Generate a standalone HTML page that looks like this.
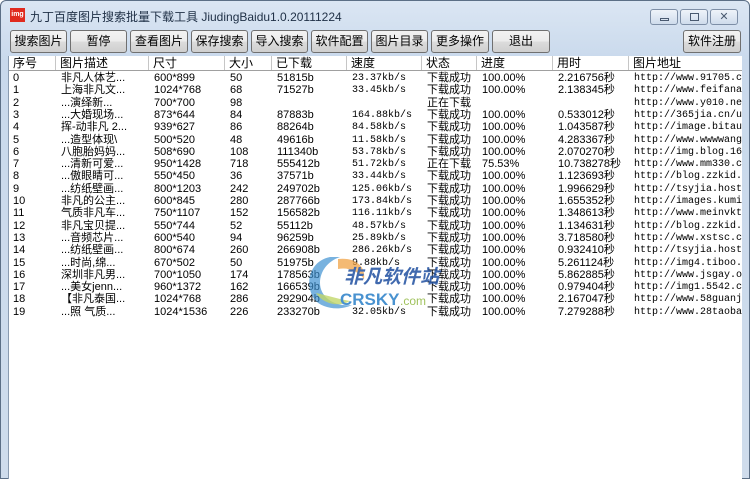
<!DOCTYPE html>
<html><head><meta charset="utf-8"><style>
*{margin:0;padding:0;box-sizing:border-box}
body{width:750px;height:479px;overflow:hidden;background:#fff;font-family:"Liberation Sans","Noto Sans CJK SC",sans-serif;position:relative}
.frame{position:absolute;left:0;top:0;width:750px;height:479px;background:linear-gradient(#dbe6f3,#c9d9ec 60px,#cfdcec);border:1px solid #5c6f86;border-radius:6px 6px 0 0}
.title{position:absolute;left:30px;top:8px;font-size:12px;color:#1e2f45;white-space:nowrap}
.logo{position:absolute;left:10px;top:8px;width:15px;height:14px;background:#e02a1e;color:#fff;font-size:7px;line-height:14px;text-align:center;font-weight:bold}
.wb{position:absolute;top:9px;height:16px;border:1px solid #7d8ea6;border-radius:3px;background:linear-gradient(#eef3f9,#cfdcec)}
.btn{position:absolute;top:30px;height:23px;border:1px solid #707070;border-radius:3px;background:linear-gradient(#f2f2f2 0,#ebebeb 50%,#dcdcdc 51%,#cfcfcf);font-size:12px;line-height:21px;text-align:center;color:#000;white-space:nowrap}
.list{position:absolute;left:8px;top:56px;width:734px;height:423px;background:#fff;border-left:1px solid #8a9bb0;overflow:hidden}
.hdr{position:absolute;left:0;top:0;width:734px;height:15px;border-bottom:1px solid #a0a0a0;background:#fff}
.hdr span{position:absolute;top:0;height:14px;font-size:12px;line-height:14px;border-right:1px solid #c6c6c6;padding-left:4px}
.r{position:absolute;left:0;height:12px;width:734px;font-size:11px;line-height:12px;white-space:nowrap}
.r span{position:absolute;top:0}
.r span.m{font-family:"Liberation Mono",monospace;font-size:10px;top:1px}
.wm{position:absolute;left:300px;top:253px;width:148px;height:60px;opacity:.85}
</style></head><body>
<div class="frame"></div>
<div class="logo">img</div>
<div class="title">九丁百度图片搜索批量下载工具 JiudingBaidu1.0.20111224</div>
<div class="wb" style="left:650px;width:28px"><div style="position:absolute;left:9px;top:8px;width:9px;height:3px;border:1px solid #4a5a70"></div></div>
<div class="wb" style="left:680px;width:28px"><div style="position:absolute;left:9px;top:3px;width:9px;height:8px;border:1px solid #4a5a70"></div></div>
<div class="wb" style="left:710px;width:28px;font-size:11px;text-align:center;line-height:14px;color:#4a5a70">✕</div>
<div class="btn" style="left:10px;width:57px">搜索图片</div>
<div class="btn" style="left:70px;width:57px">暂停</div>
<div class="btn" style="left:130px;width:58px">查看图片</div>
<div class="btn" style="left:191px;width:57px">保存搜索</div>
<div class="btn" style="left:251px;width:57px">导入搜索</div>
<div class="btn" style="left:311px;width:57px">软件配置</div>
<div class="btn" style="left:371px;width:57px">图片目录</div>
<div class="btn" style="left:431px;width:58px">更多操作</div>
<div class="btn" style="left:492px;width:58px">退出</div>
<div class="btn" style="left:683px;width:58px">软件注册</div>
<div class="list">
<div class="hdr">
<span style="left:0;width:47px">序号</span><span style="left:47px;width:93px">图片描述</span><span style="left:140px;width:76px">尺寸</span><span style="left:216px;width:47px">大小</span><span style="left:263px;width:75px">已下载</span><span style="left:338px;width:75px">速度</span><span style="left:413px;width:55px">状态</span><span style="left:468px;width:76px">进度</span><span style="left:544px;width:76px">用时</span><span style="left:620px;width:114px">图片地址</span>
</div>
<div id="rows"></div>
</div>
<script>
var d=[
["0","非凡人体艺...","600*899","50","51815b","23.37kb/s","下载成功","100.00%","2.216756秒","http://www.91705.com"],
["1","上海非凡文...","1024*768","68","71527b","33.45kb/s","下载成功","100.00%","2.138345秒","http://www.feifanart"],
["2","...演绎新...","700*700","98","","","正在下载","","","http://www.y010.net/"],
["3","...大婚现场...","873*644","84","87883b","164.88kb/s","下载成功","100.00%","0.533012秒","http://365jia.cn/up"],
["4","挥-动非凡 2...","939*627","86","88264b","84.58kb/s","下载成功","100.00%","1.043587秒","http://image.bitaut"],
["5","...造型体现\\","500*520","48","49616b","11.58kb/s","下载成功","100.00%","4.283367秒","http://www.wwwwang."],
["6","八胞胎妈妈...","508*690","108","111340b","53.78kb/s","下载成功","100.00%","2.070270秒","http://img.blog.163."],
["7","...清新可爱...","950*1428","718","555412b","51.72kb/s","正在下载","75.53%","10.738278秒","http://www.mm330.com"],
["8","...傲眼睛可...","550*450","36","37571b","33.44kb/s","下载成功","100.00%","1.123693秒","http://blog.zzkid.c"],
["9","...纺纸壁画...","800*1203","242","249702b","125.06kb/s","下载成功","100.00%","1.996629秒","http://tsyjia.host1"],
["10","非凡的公主...","600*845","280","287766b","173.84kb/s","下载成功","100.00%","1.655352秒","http://images.kumi."],
["11","气质非凡车...","750*1107","152","156582b","116.11kb/s","下载成功","100.00%","1.348613秒","http://www.meinvktv."],
["12","非凡宝贝提...","550*744","52","55112b","48.57kb/s","下载成功","100.00%","1.134631秒","http://blog.zzkid.c"],
["13","...音频芯片...","600*540","94","96259b","25.89kb/s","下载成功","100.00%","3.718580秒","http://www.xstsc.com"],
["14","...纺纸壁画...","800*674","260","266908b","286.26kb/s","下载成功","100.00%","0.932410秒","http://tsyjia.host1"],
["15","...时尚,绵...","670*502","50","51975b","9.88kb/s","下载成功","100.00%","5.261124秒","http://img4.tiboo.cn"],
["16","深圳非凡男...","700*1050","174","178563b","","下载成功","100.00%","5.862885秒","http://www.jsgay.or"],
["17","...美女jenn...","960*1372","162","166539b","","下载成功","100.00%","0.979404秒","http://img1.5542.com"],
["18","【非凡泰国...","1024*768","286","292904b","","下载成功","100.00%","2.167047秒","http://www.58guanji"],
["19","...照 气质...","1024*1536","226","233270b","32.05kb/s","下载成功","100.00%","7.279288秒","http://www.28taobao."]];
var x=[4,52,145,221,268,343,418,473,549,625],h="";
for(var i=0;i<d.length;i++){h+='<div class="r" style="top:'+(16+i*12.3)+'px">';
for(var j=0;j<10;j++){var c=(j==9||j==5)?' class="m"':'';h+='<span'+c+' style="left:'+x[j]+'px">'+d[i][j]+'</span>';}
h+='</div>';}
document.getElementById('rows').innerHTML=h;
</script>
<svg class="wm" viewBox="0 0 148 60">
<path d="M30 4 C10 8 4 30 14 46 C22 56 40 58 52 52 C34 54 20 44 20 30 C20 18 28 8 40 4 Z" fill="#3a8fd0" opacity=".8"/>
<path d="M38 6 C56 4 66 14 64 26 C58 18 48 14 38 16 Z" fill="#f0a040" opacity=".85"/>
<path d="M16 40 C24 52 40 54 50 48 C38 46 26 42 16 40Z" fill="#b8d050" opacity=".8"/>
<text x="44" y="30" font-family="Noto Sans CJK SC,sans-serif" font-size="19" font-weight="bold" font-style="italic" fill="#1f4fa0">非凡软件站</text>
<text x="40" y="52" font-family="Liberation Sans,sans-serif" font-size="17" font-weight="bold" fill="#2a80c8">CRSKY</text>
<text x="100" y="52" font-family="Liberation Sans,sans-serif" font-size="12" fill="#90b840">.com</text>
</svg>
</body></html>
